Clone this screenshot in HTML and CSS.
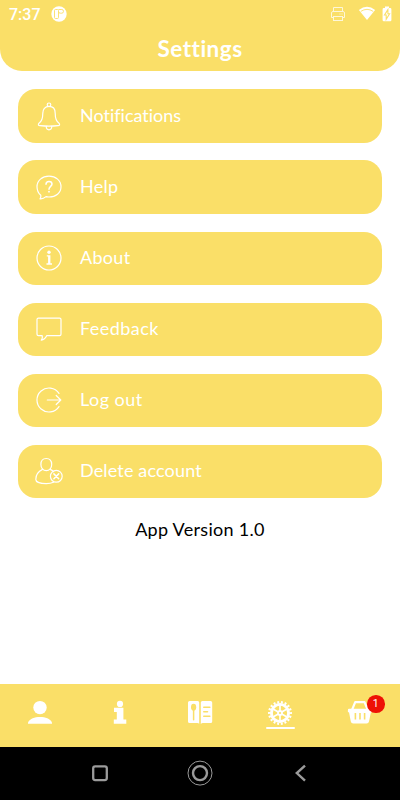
FILE: index.html
```html
<!DOCTYPE html>
<html lang="en">
<head>
    <meta charset="UTF-8">
    <meta name="viewport" content="width=device-width, initial-scale=1.0">
    <title>Settings</title>
    <link rel="stylesheet" href="styles.css">
</head>
<body>
    <div class="app">
        <header class="header">
            <div class="status-bar">
                <span class="time">7:37</span>
                <svg class="status-app" width="16" height="16" viewBox="0 0 16 16">
                    <circle cx="8" cy="8" r="7.7" fill="#fff"/>
                    <rect x="3.5" y="3.5" width="4" height="9" rx="1" fill="none" stroke="#fadf68" stroke-width=".9"/>
                    <path d="M7.5 3.5H10.8Q12.5 3.5 12.5 5.3T10.8 7.2H9.3Q7.5 7.2 7.5 5.5" fill="none" stroke="#fadf68" stroke-width=".9"/>
                </svg>
                <div class="status-right">
                    <svg class="printer" width="16" height="16" viewBox="0 0 16 16" fill="none" stroke="#fff" stroke-width="1">
                        <path d="M3.5 5V1.5H12.5V5M3.5 11.5H1.5V7Q1.5 5.5 3 5.5H13Q14.5 5.5 14.5 7V11.5H12.5"/>
                        <rect x="3.5" y="10.5" width="9" height="4"/>
                        <path d="M9.5 8H10.5M11.5 8H12.5"/>
                    </svg>
                    <svg class="wifi" width="18" height="15" viewBox="0 0 18 15">
                        <path d="M.9 4.1Q9-2.7 17.1 4.1L9 14Z" fill="#fff"/>
                        <path d="M2.8 5.4Q9 1.3 15.2 5.4" fill="none" stroke="#fadf68" stroke-width=".9"/>
                    </svg>
                    <svg class="battery" width="10" height="16" viewBox="0 0 10 16">
                        <path d="M3 .5H7V2H8.2Q9.4 2 9.4 3.2V14Q9.4 15.2 8.2 15.2H1.8Q.6 15.2 .6 14V3.2Q.6 2 1.8 2H3Z" fill="#fff"/>
                        <path d="M5.9 3.6L2.5 9H4.2V13.4L7.6 7.8H5.9Z" fill="#fff" stroke="#fadf68" stroke-width="1.1"/>
                    </svg>
                </div>
            </div>
            <h1 class="title">Settings</h1>
        </header>

        <main class="content">
            <div class="menu">
                <a class="menu-item">
                    <svg class="icon" viewBox="0 0 30 30">
                        <circle cx="15" cy="3.8" r="1.8"/>
                        <path d="M15 5.4C10.9 5.4 8.8 8.4 8.8 12.2C8.8 18 8 20.2 5 22.2Q3.4 24.4 6 24.7Q15 25.7 24 24.7Q26.6 24.4 25 22.2C22 20.2 21.2 18 21.2 12.2C21.2 8.4 19.1 5.4 15 5.4Z"/>
                        <path d="M12.2 25.3Q12.2 28.8 15 28.8T17.8 25.3"/>
                    </svg>
                    <span class="label notifications">Notifications</span>
                </a>
                <a class="menu-item">
                    <svg class="icon" viewBox="0 0 30 30">
                        <path d="M6.8 23.3C4.3 21.2 3 18.1 3 14.8C3 8.5 8.2 4.2 15 4.2S27 8.5 27 14.8S21.8 25 15 25Q13.4 25 12 24.6Q9 27.2 6 26.8Q7.3 25.3 6.8 23.3Z"/>
                        <path d="M12 12.2Q12 9.4 15 9.4T18 12.1C18 14.4 15 14.5 15 17.2" class="bold"/>
                        <circle cx="15" cy="19.7" r=".9" class="solid"/>
                    </svg>
                    <span class="label">Help</span>
                </a>
                <a class="menu-item">
                    <svg class="icon" viewBox="0 0 30 30">
                        <circle cx="15" cy="15" r="12"/>
                        <circle cx="15" cy="9.2" r="1.7" class="solid"/>
                        <path d="M12.8 12.2H16.4V20.3H18V21.7H12.5V20.3H14.1V13.5H12.8Z" class="solid"/>
                    </svg>
                    <span class="label">About</span>
                </a>
                <a class="menu-item">
                    <svg class="icon" viewBox="0 0 30 30">
                        <path d="M4.4 4.2H25.6Q27 4.2 27 5.6V20.2Q27 21.6 25.6 21.6H12.8Q10.8 25.8 7.3 26.2Q8.9 24 8.2 21.6H4.4Q3 21.6 3 20.2V5.6Q3 4.2 4.4 4.2Z"/>
                    </svg>
                    <span class="label feedback">Feedback</span>
                </a>
                <a class="menu-item">
                    <svg class="icon" viewBox="0 0 30 30">
                        <path d="M25 8.4A12 12 0 1 0 25 21.6M13.3 15H26.7M22.2 10.5L26.8 15L22.2 19.5"/>
                    </svg>
                    <span class="label logout">Log out</span>
                </a>
                <a class="menu-item">
                    <svg class="icon" viewBox="0 0 30 30">
                        <path d="M12.3 2.5C8.7 2.5 6.9 5 6.9 8.4C6.9 12 9.2 14.7 12.3 14.7S17.7 12 17.7 8.4C17.7 5 15.9 2.5 12.3 2.5Z"/>
                        <path d="M8.5 13.4C4.2 15.5 1.8 19 1.8 23.4C1.8 26 6.5 27.6 12.3 27.6Q16.5 27.6 19.5 26.2M16.2 13.4Q18.3 14.3 19.5 15.7"/>
                        <circle cx="22.3" cy="20.3" r="5.9"/>
                        <path d="M19.9 17.9L24.7 22.7M24.7 17.9L19.9 22.7" class="bold"/>
                    </svg>
                    <span class="label delete">Delete account</span>
                </a>
            </div>
            <p class="version">App Version 1.0</p>
        </main>

        <nav class="tab-bar">
            <a class="tab">
                <svg width="28" height="28" viewBox="0 0 28 28" fill="#fff">
                    <circle cx="14" cy="8.6" r="6.7"/>
                    <path d="M2 24.8V23.4C4 19.4 8.5 17.9 14 17.9S24 19.4 26 23.4V24.8Z"/>
                </svg>
            </a>
            <a class="tab">
                <svg width="28" height="28" viewBox="0 0 28 28" fill="#fff">
                    <circle cx="14" cy="4.9" r="3.1"/>
                    <path d="M8 8.7H17.4V20.6H20.3V24.8H7.8V20.6H10.8V13H8Z"/>
                </svg>
            </a>
            <a class="tab">
                <svg width="28" height="28" viewBox="0 0 28 28">
                    <path d="M3.6 2H11.7Q13.2 2 13.2 3.5V24.7Q12.5 24 11.4 24H3.6Q2 24 2 22.4V3.6Q2 2 3.6 2Z" fill="#fff"/>
                    <path d="M16.4 2H24.6Q26.2 2 26.2 3.6V22.4Q26.2 24 24.6 24H16.8Q15.6 24 14.8 24.9V3.5Q14.8 2 16.4 2Z" fill="#fff"/>
                    <ellipse cx="7.6" cy="8.2" rx="2.6" ry="3.4" fill="#fadf68"/>
                    <path d="M7.6 11V20.8" stroke="#fadf68" stroke-width="1.5" stroke-linecap="round"/>
                    <path d="M17.8 8.2H23.8M17.8 12.8H21.5M17.8 17.3H23.8" stroke="#fadf68" stroke-width="1.6" stroke-linecap="round"/>
                </svg>
            </a>
            <a class="tab active">
                <svg width="28" height="28" viewBox="0 0 28 28" fill="none" stroke="#fff">
                    <circle cx="14" cy="14" r="8.6" stroke-width="2.9"/>
                    <circle cx="14" cy="14" r="10.8" stroke-width="2.4" pathLength="72" stroke-dasharray="2.1 1.9" stroke-dashoffset="1"/>
                    <path d="M14 5.5V22.5M6.6 9.75L21.4 18.25M21.4 9.75L6.6 18.25" stroke-width="1.7"/>
                    <circle cx="14" cy="14" r="2.9" fill="#fff" stroke="none"/>
                    <circle cx="14" cy="14" r="1.1" fill="#fadf68" stroke="none"/>
                </svg>
            </a>
            <a class="tab">
                <svg width="28" height="28" viewBox="0 0 28 28">
                    <path d="M6 11L9.2 3.1H18.5L21.8 11" fill="none" stroke="#fff" stroke-width="2.2" stroke-linejoin="round"/>
                    <path d="M2.9 9.8H24.8Q26 9.8 26 11V13.3H24.9L23 22.6Q22.6 24.6 20.6 24.6H7.2Q5.2 24.6 4.8 22.6L3 13.3H1.9V11Q1.9 9.8 2.9 9.8Z" fill="#fff"/>
                    <path d="M9.4 14V20.5M14 14V20.5M18.6 14V20.5" stroke="#fadf68" stroke-width="1.6"/>
                </svg>
                <span class="badge">1</span>
            </a>
        </nav>

        <!-- Android navigation buttons -->
        <footer class="system-bar">
            <svg width="28" height="28" viewBox="0 0 28 28" fill="none" stroke="#9b9b9b">
                <rect x="7.2" y="7.3" width="13.6" height="13.8" rx="2" stroke-width="2.3"/>
            </svg>
            <svg width="28" height="28" viewBox="0 0 28 28" fill="none" stroke="#9b9b9b">
                <circle cx="14" cy="14.1" r="12" stroke-width="1"/>
                <circle cx="14" cy="14.1" r="7" stroke-width="2.4"/>
            </svg>
            <svg width="28" height="28" viewBox="0 0 28 28" fill="none" stroke="#9b9b9b">
                <path d="M19 6.6L10.8 14.1L19 21.6" stroke-width="2.4"/>
            </svg>
        </footer>
    </div>
</body>
</html>
```
FILE: styles.css
```css
* {
    box-sizing: border-box;
}

body {
    margin: 0;
    background: #fff;
    font-family: Lato, "Open Sans", sans-serif;
    font-variant-ligatures: none;
}

.app {
    display: flex;
    flex-direction: column;
    width: 400px;
    height: 800px;
    overflow: hidden;
}

.header {
    height: 71.4px;
    background: #fadf68;
    border-radius: 0 0 22px 22px;
    color: #fff;
}

.status-bar {
    display: flex;
    align-items: center;
    height: 27px;
    padding: 0 8px 0 9px;
}

.time {
    width: 42px;
    font-family: Roboto, sans-serif;
    font-size: 16px;
    font-weight: 500;
    line-height: 27px;
    padding-top: 1px;
}

.status-right {
    display: flex;
    align-items: center;
    margin-left: auto;
}

.printer {
    opacity: 0.75;
    margin-right: 12px;
}

.wifi {
    margin-right: 6px;
}

.title {
    margin: 8px 0 0;
    font-size: 22.5px;
    font-weight: 700;
    line-height: 28px;
    letter-spacing: 0.5px;
    text-align: center;
}

.content {
    flex: 1;
    padding: 18px 18px 0;
}

.menu {
    display: flex;
    flex-direction: column;
    gap: 17.7px;
}

.menu-item {
    display: flex;
    align-items: center;
    height: 53.4px;
    padding-left: 16px;
    background: #fadf68;
    border-radius: 18px;
    color: #fff;
}

.icon {
    width: 30px;
    height: 30px;
    margin-right: 16px;
    fill: none;
    stroke: #fff;
    stroke-width: 1.2;
    stroke-linecap: round;
    stroke-linejoin: round;
}

.icon .bold {
    stroke-width: 1.5;
}

.icon .solid {
    fill: #fff;
    stroke: none;
}

.label {
    font-size: 18px;
    line-height: 24px;
    letter-spacing: 0.3px;
    padding-bottom: 2px;
}

.notifications {
    letter-spacing: 0;
}

.feedback,
.logout {
    letter-spacing: 0.45px;
}

.delete {
    letter-spacing: 0.15px;
}

.version {
    margin: 18px 0 0;
    font-size: 18px;
    line-height: 26px;
    letter-spacing: 0.3px;
    text-align: center;
    color: #000;
}

.tab-bar {
    display: grid;
    grid-template-columns: repeat(5, 1fr);
    height: 62.3px;
    background: #fadf68;
}

.tab {
    position: relative;
    display: flex;
    flex-direction: column;
    align-items: center;
    padding-top: 14.6px;
}

.active::after {
    content: '';
    width: 29px;
    height: 2px;
    margin-top: 0.4px;
    background: #fff;
    border-radius: 1px;
}

.badge {
    position: absolute;
    top: 11px;
    left: 47px;
    width: 17.5px;
    height: 17.5px;
    border-radius: 50%;
    background: #ee1105;
    color: #fff;
    font-family: Roboto, sans-serif;
    font-size: 10.5px;
    line-height: 17.5px;
    text-align: center;
}

.system-bar {
    display: flex;
    justify-content: space-between;
    align-items: center;
    height: 53.3px;
    padding: 0 86px;
    background: #000;
}
```
